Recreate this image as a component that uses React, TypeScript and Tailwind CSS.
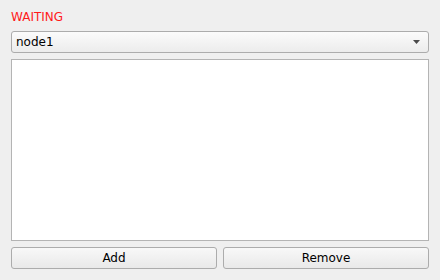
export default function App() {
  return (
    <div
      className="w-[440px] h-[280px] bg-[#efefef] px-[11px] pt-[10px] pb-[11px] flex flex-col text-[12px] text-black"
      style={{ fontFamily: '"DejaVu Sans", sans-serif' }}
    >
      <div className="h-[14px] leading-[14px] text-[#ff1a1a]">WAITING</div>

      <div className="mt-[7px] h-[22px] flex items-center justify-between rounded-[3px] border border-[#acacac] bg-gradient-to-b from-[#fbfbfb] to-[#ececec] pl-[4px] pr-[8px]">
        <span className="leading-[14px]">node1</span>
        <svg width="7" height="4" viewBox="0 0 7 4">
          <path d="M0 0H7L3.5 4Z" fill="#4a4a4a" />
        </svg>
      </div>

      <div className="mt-[6px] flex-1 bg-white border border-[#b4b4b4]" />

      <div className="mt-[6px] h-[22px] grid grid-cols-2 gap-[6px]">
        <button className="rounded-[3px] border border-[#acacac] bg-gradient-to-b from-[#f8f8f8] to-[#e9e9e9] leading-[14px]">
          Add
        </button>
        <button className="rounded-[3px] border border-[#acacac] bg-gradient-to-b from-[#f8f8f8] to-[#e9e9e9] leading-[14px]">
          Remove
        </button>
      </div>
    </div>
  );
}
